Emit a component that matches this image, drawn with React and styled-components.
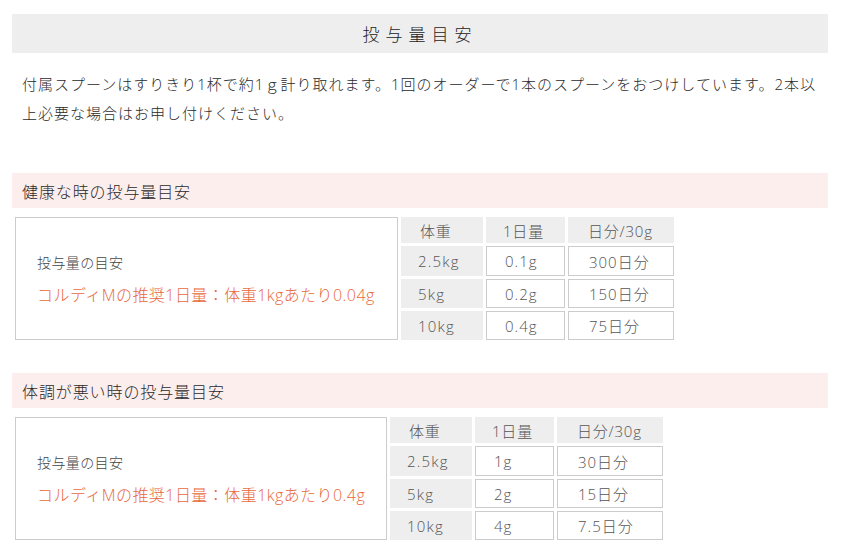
import React from "react";
import styled, { createGlobalStyle } from "styled-components";

const GlobalStyle = createGlobalStyle`
  html, body {
    margin: 0;
    padding: 0;
    background: #ffffff;
  }
  body {
    font-family: "Open Sans", "Noto Sans CJK JP", sans-serif;
    font-weight: 300;
    color: #333333;
  }
`;

const Page = styled.div`
  width: 816px;
  padding: 14px 0 0 12px;
`;

const TitleBar = styled.h2`
  margin: 0;
  height: 39px;
  background: #eeeeee;
  display: flex;
  align-items: center;
  justify-content: center;
  font-size: 17px;
  font-weight: 300;
  letter-spacing: 6px;
  color: #222222;
`;

const Lead = styled.p`
  margin: 17px 0 0;
  padding: 0 10px;
  font-size: 15px;
  letter-spacing: 1px;
  line-height: 29px;
  color: #2a2a2a;
`;

const Section = styled.section`
  margin-top: ${(p) => p.$gap}px;
`;

const SectionHeading = styled.h3`
  margin: 0;
  height: 35px;
  background: #fdeeee;
  display: flex;
  align-items: center;
  padding-left: 10px;
  font-size: 16px;
  font-weight: 300;
  letter-spacing: 0.9px;
  color: #2a2a2a;
`;

const DoseTable = styled.table`
  margin-top: 6px;
  border-collapse: separate;
  border-spacing: 3px;
  font-size: 15px;
  color: #555555;
`;

const NoteCell = styled.td`
  width: ${(p) => p.$width}px;
  border: 1px solid #cccccc;
  padding: 0 0 0 21px;
  box-sizing: border-box;
  vertical-align: middle;
`;

const NoteLabel = styled.div`
  font-size: 14px;
  line-height: 33px;
  color: #444444;
  letter-spacing: 0.4px;
`;

const NoteValue = styled.div`
  font-size: 16px;
  line-height: 33px;
  color: #e8683c;
  letter-spacing: 0.45px;
`;

const HeadCell = styled.th`
  width: ${(p) => p.$width}px;
  height: 26px;
  box-sizing: border-box;
  background: #eeeeee;
  font-weight: 300;
  text-align: left;
  padding: 0 0 0 ${(p) => p.$pad}px;
  color: #555555;
  letter-spacing: 0.8px;
`;

const WeightCell = styled.td`
  height: ${(p) => p.$height}px;
  box-sizing: border-box;
  background: #eeeeee;
  padding: 0 0 0 17px;
  letter-spacing: 1.2px;
`;

const ValueCell = styled.td`
  height: ${(p) => p.$height}px;
  box-sizing: border-box;
  border: 1px solid #cccccc;
  background: #ffffff;
  padding: 0 0 0 ${(p) => p.$pad}px;
  letter-spacing: 1px;
`;

const sections = [
  {
    title: "健康な時の投与量目安",
    gap: 45,
    noteWidth: 383,
    dose: "コルディMの推奨1日量：体重1kgあたり0.04g",
    rows: [
      ["2.5kg", "0.1g", "300日分"],
      ["5kg", "0.2g", "150日分"],
      ["10kg", "0.4g", "75日分"],
    ],
  },
  {
    title: "体調が悪い時の投与量目安",
    gap: 30,
    noteWidth: 372,
    dose: "コルディMの推奨1日量：体重1kgあたり0.4g",
    rows: [
      ["2.5kg", "1g", "30日分"],
      ["5kg", "2g", "15日分"],
      ["10kg", "4g", "7.5日分"],
    ],
  },
];

const rowHeights = [30, 29, 29];

export default function App() {
  return (
    <>
      <GlobalStyle />
      <Page>
        <TitleBar>投与量目安</TitleBar>
        <Lead>
          付属スプーンはすりきり1杯で約1ｇ計り取れます。1回のオーダーで1本のスプーンをおつけしています。2本以上必要な場合はお申し付けください。
        </Lead>
        {sections.map((s) => (
          <Section key={s.title} $gap={s.gap}>
            <SectionHeading>{s.title}</SectionHeading>
            <DoseTable>
              <tbody>
                <tr>
                  <NoteCell rowSpan={4} $width={s.noteWidth}>
                    <NoteLabel>投与量の目安</NoteLabel>
                    <NoteValue>{s.dose}</NoteValue>
                  </NoteCell>
                  <HeadCell $width={82} $pad={19}>体重</HeadCell>
                  <HeadCell $width={79} $pad={17}>1日量</HeadCell>
                  <HeadCell $width={106} $pad={20}>日分/30g</HeadCell>
                </tr>
                {s.rows.map((r, i) => (
                  <tr key={r[0]}>
                    <WeightCell $height={rowHeights[i]}>{r[0]}</WeightCell>
                    <ValueCell $height={rowHeights[i]} $pad={18}>{r[1]}</ValueCell>
                    <ValueCell $height={rowHeights[i]} $pad={20}>{r[2]}</ValueCell>
                  </tr>
                ))}
              </tbody>
            </DoseTable>
          </Section>
        ))}
      </Page>
    </>
  );
}
